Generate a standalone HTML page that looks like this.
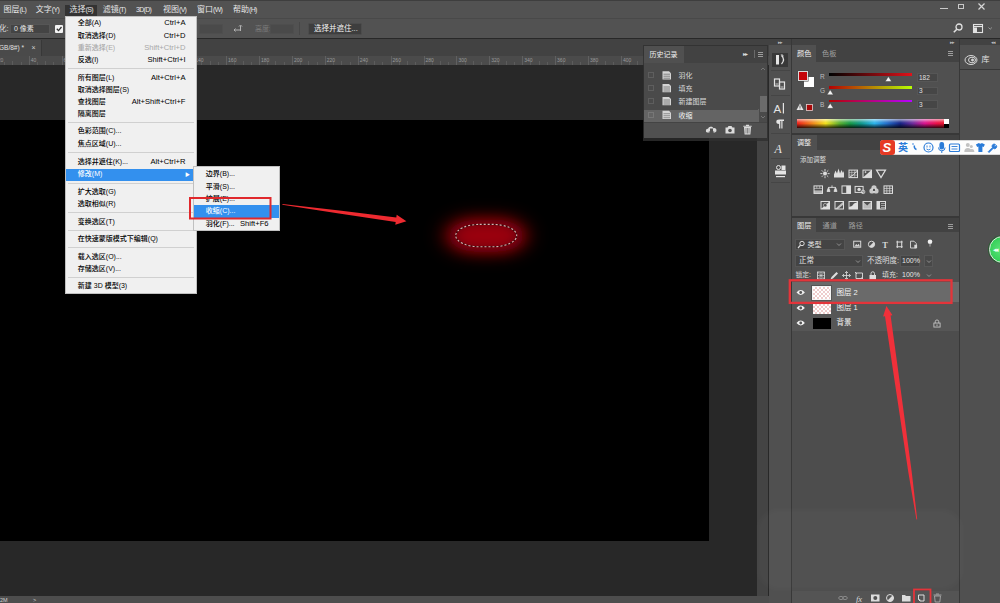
<!DOCTYPE html>
<html lang="zh-CN">
<head>
<meta charset="utf-8">
<title>Photoshop</title>
<style>
*{box-sizing:border-box;margin:0;padding:0}
html,body{width:1000px;height:603px;overflow:hidden;background:#282828}
body{position:relative;font-family:"Liberation Sans","Noto Sans CJK SC",sans-serif;font-size:8.5px;color:#e6e6e6;line-height:1}
.abs{position:absolute}
.t{position:absolute;white-space:nowrap;line-height:10px;height:10px}
#menubar{left:0;top:0;width:1000px;height:17.5px;background:#525252;border-top:1.2px solid #3e3e3e}
#optbar{left:0;top:17.5px;width:1000px;height:20.7px;background:#525252;border-top:1px solid #494949}
#tabbar{left:0;top:39px;width:770px;height:17px;background:#424242}
#ruler{left:0;top:56px;width:770px;height:9px;background:#4b4b4b}
#canvas{left:0;top:120.2px;width:709.2px;height:421px;background:#000}
#status{left:0;top:595.5px;width:769px;height:7.5px;background:#4d4d4d}
.menu{background:#f0f0f0;border:1px solid #c0c0c0;color:#000;font-weight:500}
.mi{position:absolute;left:0;right:0;height:12.4px;line-height:12.4px;font-size:7px;white-space:nowrap}
.mi .l{position:absolute;left:11.8px;top:-0.4px}
.mi .r{position:absolute;right:10px;top:-0.4px;font-size:7.6px}
.mi.dis{color:#a8a8a8}
.mi.hl{background:#3390ee;color:#fff}
.sep{position:absolute;left:2px;right:2px;height:1px;background:#d0d0d0}
.checker{background-color:#fff;background-image:linear-gradient(45deg,#ecc 25%,transparent 25%,transparent 75%,#ecc 75%),linear-gradient(45deg,#ecc 25%,transparent 25%,transparent 75%,#ecc 75%);background-size:4px 4px;background-position:0 0,2px 2px}
.s{font-size:7px;letter-spacing:-0.7px}
#mb .t{font-size:8px}
</style>
</head>
<body>
<!-- top bars -->
<div id="menubar" class="abs"></div>
<div id="optbar" class="abs"></div>
<div id="tabbar" class="abs"></div>
<div id="ruler" class="abs"></div>
<div id="canvas" class="abs"></div>
<div id="status" class="abs"></div>

<!-- menubar text -->
<div id="mb">
<div class="t" style="left:3.6px;top:5px">图层<span class="s">(L)</span></div>
<div class="t" style="left:35.8px;top:5px">文字<span class="s">(Y)</span></div>
<div class="abs" style="left:65px;top:5px;width:32px;height:11px;background:#333"></div>
<div class="t" style="left:69.6px;top:5px">选择<span class="s">(S)</span></div>
<div class="t" style="left:102.7px;top:5px">滤镜<span class="s">(T)</span></div>
<div class="t" style="left:136px;top:5px"><span class="s">3D(D)</span></div>
<div class="t" style="left:163px;top:5px">视图<span class="s">(V)</span></div>
<div class="t" style="left:197px;top:5px">窗口<span class="s">(W)</span></div>
<div class="t" style="left:233px;top:5px">帮助<span class="s">(H)</span></div>

</div>
<!-- RIGHT-PANELS -->
<!-- right dock background -->
<div class="abs" style="left:770px;top:39px;width:230px;height:564px;background:#383838"></div>
<!-- icon strip -->
<div class="abs" style="left:768.500px;top:39px;width:22.500px;height:6px;background:#424242"></div>
<div class="abs" style="left:768.500px;top:45px;width:22.500px;height:558px;background:#505050"></div>
<div class="abs" style="left:772px;top:53px;width:16px;height:14px;background:#383838"></div>
<div class="abs" style="left:771px;top:70px;width:19px;height:1px;background:#454545"></div>
<div class="abs" style="left:771px;top:95px;width:19px;height:1px;background:#454545"></div>
<div class="abs" style="left:771px;top:133px;width:19px;height:1px;background:#454545"></div>
<div class="abs" style="left:771px;top:158px;width:19px;height:1px;background:#454545"></div>
<div class="abs" style="left:771px;top:182px;width:19px;height:1px;background:#454545"></div>
<svg class="abs" style="left:770px;top:45px" width="21" height="145" viewBox="0 0 21 145">
 <g fill="none" stroke="#e4e4e4" stroke-width="1.200">
  <rect x="6" y="10" width="3" height="9.500" fill="#e4e4e4" stroke="none"/>
  <path d="M11.500 10.500q4 4 0 8.500"/><path d="M10.800 9.800l2.200 0.300l-0.300 2" stroke-width="0.800"/>
  <rect x="4.500" y="34" width="5" height="7"/><rect x="9.500" y="37" width="5" height="7"/>
  <path d="M5.500 39h3M10.500 42h3" stroke-width="0.800"/>
 </g>
 <text x="3.500" y="67.500" font-size="11.500" fill="#e4e4e4" font-family="Liberation Sans, sans-serif">A</text>
 <rect x="12.800" y="58" width="1.200" height="10.500" fill="#e4e4e4"/>
 <path d="M7 74.500h7v1.500h-1.500v7.500h-1.200v-7.500h-1v7.500h-1.200v-4.500q-2.800 0-2.800-2.200q0-2.300 2.800-2.300z" fill="#e4e4e4"/>
 <text x="4.500" y="107.500" font-size="12" font-style="italic" fill="#e4e4e4" font-family="Liberation Serif, serif">A</text>
 <rect x="5" y="125.500" width="11" height="4" fill="#e4e4e4"/><rect x="6" y="131" width="9" height="1.200" fill="#e4e4e4"/>
 <circle cx="8.500" cy="122.500" r="2" fill="none" stroke="#e4e4e4" stroke-width="1"/><rect x="11.500" y="120.500" width="4" height="4.500" fill="#e4e4e4"/>
</svg>
<div class="abs" style="left:778px;top:40.500px;width:7px;height:3px;font-size:5px;line-height:3px;color:#bbb;letter-spacing:-1px">▸▸</div>

<!-- color panel -->
<div class="abs" style="left:792px;top:39px;width:167px;height:6px;background:#424242"></div>
<div class="abs" style="left:792px;top:45px;width:167px;height:17px;background:#424242"></div>
<div class="abs" style="left:792px;top:45px;width:24px;height:18px;background:#505050"></div>
<div class="abs" style="left:792px;top:62px;width:167px;height:71px;background:#505050"></div>
<div class="t" style="left:797px;top:49px;font-size:7.200px;color:#f0f0f0">颜色</div>
<div class="t" style="left:822px;top:49px;font-size:7.200px;color:#a0a0a0">色板</div>
<div class="abs" style="left:948px;top:51px;width:5px;height:1px;background:#9c9c9c;box-shadow:0 2px 0 #9c9c9c,0 4px 0 #9c9c9c"></div>
<div class="abs" style="left:950px;top:40.500px;width:7px;height:3px;font-size:5px;line-height:3px;color:#bbb;letter-spacing:-1px">▸▸</div>
<!-- swatches -->
<div class="abs" style="left:803.500px;top:77px;width:10.500px;height:10px;background:#fff"></div>
<div class="abs" style="left:797.500px;top:70.500px;width:10.500px;height:10.500px;background:#c4040a;border:1px solid #d8d8d8;box-shadow:0 0 0 0.500px #444"></div>
<div class="t" style="left:820px;top:72px;font-size:6.500px;color:#bdbdbd">R</div>
<div class="t" style="left:820px;top:86px;font-size:6.500px;color:#bdbdbd">G</div>
<div class="t" style="left:820px;top:99.500px;font-size:6.500px;color:#bdbdbd">B</div>
<div class="abs" style="left:829px;top:72.500px;width:83px;height:3px;background:linear-gradient(90deg,#000303 0%,#1a0303 12%,#e0121a 100%)"></div>
<div class="abs" style="left:829px;top:86px;width:83px;height:2.500px;background:linear-gradient(90deg,#b60003,#b6ff03)"></div>
<div class="abs" style="left:829px;top:99.500px;width:83px;height:2.500px;background:linear-gradient(90deg,#b60300,#b603ff)"></div>
<svg class="abs" style="left:820px;top:70px" width="100" height="45" viewBox="0 0 100 45">
 <g fill="#f4f4f4" stroke="#333" stroke-width="0.400">
  <path d="M68.400 6.500l3.200 5h-6.400z"/><path d="M10.200 19.800l3.200 5h-6.400z"/><path d="M10.200 33.300l3.200 5h-6.400z"/>
 </g>
</svg>
<div class="abs" style="left:917px;top:73px;width:21px;height:8.500px;background:#464646;border:1px solid #565656"></div>
<div class="abs" style="left:917px;top:86.500px;width:21px;height:8.500px;background:#464646;border:1px solid #565656"></div>
<div class="abs" style="left:917px;top:100px;width:21px;height:8.500px;background:#464646;border:1px solid #565656"></div>
<div class="t" style="left:919px;top:72.500px;font-size:6.500px;color:#e0e0e0">182</div>
<div class="t" style="left:919px;top:86px;font-size:6.500px;color:#e0e0e0">3</div>
<div class="t" style="left:919px;top:99.500px;font-size:6.500px;color:#e0e0e0">3</div>
<svg class="abs" style="left:796px;top:102px" width="20" height="11" viewBox="0 0 20 11">
 <path d="M4 1.500l3.500 6.500h-7z" fill="#e8e8e8"/><rect x="3.600" y="3.500" width="0.800" height="2.500" fill="#444"/><rect x="3.600" y="6.500" width="0.800" height="0.800" fill="#444"/>
 <rect x="10.500" y="2.500" width="6" height="6" fill="#a80808" stroke="#e6d0d0" stroke-width="0.800"/>
</svg>
<div class="abs" style="left:796.500px;top:119px;width:152px;height:9px;background:linear-gradient(180deg,rgba(255,255,255,.62) 0%,rgba(255,255,255,.1) 35%,rgba(0,0,0,0) 50%,rgba(0,0,0,.8) 100%),linear-gradient(90deg,#ec201a 0%,#f27a1c 9%,#f2e21e 19%,#5cb030 28%,#189a48 35%,#10988a 42%,#2cb4ec 51%,#2470cc 59%,#162486 68%,#6c2c9c 76%,#d8148e 84%,#ec1048 92%,#e41a1a 100%)"></div>
<div class="abs" style="left:944px;top:119px;width:4.500px;height:4.500px;background:#fff"></div>
<div class="abs" style="left:944px;top:123.500px;width:4.500px;height:4.500px;background:#000"></div>

<!-- adjustments panel -->
<div class="abs" style="left:792px;top:135px;width:167px;height:15px;background:#424242"></div>
<div class="abs" style="left:792px;top:135px;width:25px;height:16px;background:#505050"></div>
<div class="abs" style="left:792px;top:150px;width:167px;height:66px;background:#505050"></div>
<div class="t" style="left:797px;top:138px;font-size:7px;color:#f0f0f0">调整</div>
<div class="t" style="left:800px;top:155px;font-size:6.500px;color:#dcdcdc">添加调整</div>
<svg class="abs" style="left:792px;top:165px" width="110" height="50" viewBox="0 0 110 50"><circle cx="33" cy="8.599999999999994" r="2" fill="#dedede"/><line x1="35.60" y1="8.60" x2="37.60" y2="8.60" stroke="#dedede" stroke-width="0.9"/><line x1="34.84" y1="10.44" x2="36.25" y2="11.85" stroke="#dedede" stroke-width="0.9"/><line x1="33.00" y1="11.20" x2="33.00" y2="13.20" stroke="#dedede" stroke-width="0.9"/><line x1="31.16" y1="10.44" x2="29.75" y2="11.85" stroke="#dedede" stroke-width="0.9"/><line x1="30.40" y1="8.60" x2="28.40" y2="8.60" stroke="#dedede" stroke-width="0.9"/><line x1="31.16" y1="6.76" x2="29.75" y2="5.35" stroke="#dedede" stroke-width="0.9"/><line x1="33.00" y1="6.00" x2="33.00" y2="4.00" stroke="#dedede" stroke-width="0.9"/><line x1="34.84" y1="6.76" x2="36.25" y2="5.35" stroke="#dedede" stroke-width="0.9"/><path d="M42 12.599999999999994v-3l1.5-4l1.5 3l1.5-5l1.500 5l1.500-3.500l1.500 3l1 -2v6.500z" fill="#dedede"/><g transform="translate(56.5,4.6)"><rect x="0.5" y="0.5" width="8.5" height="7.5" fill="none" stroke="#dedede" stroke-width="1"/><path d="M0.500 3h8.500M0.500 5.500h8.500M3.300 0.500v7.500M6.200 0.500v7.500" stroke="#dedede" stroke-width="0.500"/><path d="M1 7.500q4 -1 7.500 -6.500" stroke="#dedede" fill="none" stroke-width="0.900"/></g><g transform="translate(70.5,4.6)"><rect x="0.5" y="0.5" width="8.5" height="7.5" fill="none" stroke="#dedede" stroke-width="1"/><path d="M0.500 8l8.500-7.500v7.500z" fill="#dedede"/><path d="M2 2.500h2M3 1.500v2" stroke="#dedede" stroke-width="0.700"/></g><path d="M84.5 5.099999999999994h9l-4.500 7.500z" fill="none" stroke="#dedede" stroke-width="1.200"/><g transform="translate(21.5,20.4)"><rect x="0.5" y="0.5" width="8.5" height="7.5" fill="none" stroke="#dedede" stroke-width="1"/><path d="M0.500 3h8.500M3.300 0.500v2.500M6.200 0.500v2.500" stroke="#dedede" stroke-width="0.600"/><rect x="0.500" y="5" width="8.500" height="3" fill="#dedede" opacity="0.700"/></g><path d="M40 20.400000000000006v2M36.5 22.400000000000006h7M36.5 22.400000000000006l-1.500 4h3zM43.5 22.400000000000006l-1.500 4h3z" stroke="#dedede" stroke-width="0.900" fill="#dedede"/><g transform="translate(49.5,20.4)"><rect x="0.5" y="0.5" width="8.5" height="7.5" fill="none" stroke="#dedede" stroke-width="1"/><rect x="4.700" y="0.500" width="4.300" height="7.500" fill="#dedede"/></g><rect x="63.10000000000002" y="21.400000000000006" width="8" height="6" fill="none" stroke="#dedede" stroke-width="1"/><circle cx="67.10000000000002" cy="24.400000000000006" r="1.700" fill="#dedede"/><circle cx="71.10000000000002" cy="26.900000000000006" r="1.800" fill="none" stroke="#dedede" stroke-width="0.800"/><circle cx="82" cy="22.900000000000006" r="2.600" fill="#dedede" opacity="0.850"/><circle cx="80" cy="25.900000000000006" r="2.600" fill="#dedede" opacity="0.850"/><circle cx="84" cy="25.900000000000006" r="2.600" fill="#dedede" opacity="0.850"/><circle cx="82" cy="24.900000000000006" r="1.200" fill="#505050"/><g transform="translate(91.5,20.4)"><rect x="0.5" y="0.5" width="8.5" height="7.5" fill="none" stroke="#dedede" stroke-width="1"/><path d="M0.500 3h8.500M0.500 5.500h8.500M3.300 0.500v7.500M6.200 0.500v7.500" stroke="#dedede" stroke-width="0.700"/></g><g transform="translate(28.5,36.0)"><rect x="0.5" y="0.5" width="8.5" height="7.5" fill="none" stroke="#dedede" stroke-width="1"/><path d="M0.500 8l8.500-7.500v7.500z" fill="#dedede"/><circle cx="4.700" cy="4.200" r="1.800" fill="#505050" stroke="#dedede" stroke-width="0.600"/></g><g transform="translate(42.5,36.0)"><rect x="0.5" y="0.5" width="8.5" height="7.5" fill="none" stroke="#dedede" stroke-width="1"/><path d="M0.500 8l8.500-7.500v3l-5.500 4.500z" fill="#dedede" opacity="0.800"/></g><g transform="translate(56.5,36.0)"><rect x="0.5" y="0.5" width="8.5" height="7.5" fill="none" stroke="#dedede" stroke-width="1"/><path d="M0.500 8v-2l3-1l2-2.500l3.500-1.500v7z" fill="#dedede"/></g><g transform="translate(70.5,36.0)"><rect x="0.5" y="0.5" width="8.5" height="7.5" fill="none" stroke="#dedede" stroke-width="1"/><path d="M0.500 0.500l4.200 4l4.300-4v7.500h-8.500z" fill="#dedede" opacity="0.750"/></g><g transform="translate(84.5,36.0)"><rect x="0.5" y="0.5" width="8.5" height="7.5" fill="none" stroke="#dedede" stroke-width="1"/><rect x="0.500" y="0.500" width="3" height="7.500" fill="#dedede"/><path d="M4.500 2.500h4M4.500 4.500h4M4.500 6.500h4" stroke="#dedede" stroke-width="0.600"/></g></svg>

<!-- layers panel -->
<div class="abs" style="left:792px;top:218px;width:167px;height:14px;background:#424242"></div>
<div class="abs" style="left:792px;top:218px;width:24px;height:15px;background:#505050"></div>
<div class="abs" style="left:792px;top:232px;width:167px;height:371px;background:#505050"></div>
<div class="t" style="left:797px;top:220.500px;font-size:7.200px;color:#f0f0f0">图层</div>
<div class="t" style="left:822.500px;top:220.500px;font-size:7.200px;color:#a0a0a0">通道</div>
<div class="t" style="left:848.500px;top:220.500px;font-size:7.200px;color:#a0a0a0">路径</div>
<div class="abs" style="left:948px;top:224px;width:5px;height:1px;background:#9c9c9c;box-shadow:0 2px 0 #9c9c9c,0 4px 0 #9c9c9c"></div>
<!-- filter row -->
<div class="abs" style="left:795px;top:239px;width:50px;height:11px;background:#444;border:1px solid #565656"></div>
<svg class="abs" style="left:797px;top:240px" width="9" height="9" viewBox="0 0 9 9"><circle cx="5" cy="3.500" r="2.200" fill="none" stroke="#dcdcdc" stroke-width="1"/><path d="M3.500 5.200l-2.500 2.800" stroke="#dcdcdc" stroke-width="1.200"/></svg>
<div class="t" style="left:807.500px;top:239.500px;font-size:7px;color:#e4e4e4">类型</div>
<svg class="abs" style="left:836px;top:242px" width="6" height="5" viewBox="0 0 6 5"><path d="M1 1.500l2 2l2-2" fill="none" stroke="#999" stroke-width="0.900"/></svg>
<svg class="abs" style="left:850px;top:237px" width="90" height="15" viewBox="0 0 90 15">
 <g fill="none" stroke="#d8d8d8" stroke-width="1">
  <rect x="3.700" y="4.200" width="7" height="6"/><path d="M4.500 9.500l1.700-2.500l1.300 1.300l1.200-1.600l1.300 2.800z" fill="#d8d8d8" stroke="none"/>
  <circle cx="21.500" cy="7.300" r="3.100"/><path d="M19.300 9.500a3.100 3.100 0 0 0 4.400-4.400z" fill="#d8d8d8" stroke="none"/>
  <path d="M46.300 5h6.400M46.300 9.800h6.400M47.300 3.800v7.200M51.700 3.800v7.200" stroke-width="1.100"/>
  <path d="M60.500 4.200h3.500l2.300 2.300v4.500h-5.800z" stroke-width="0.900"/><path d="M64.300 7.800h2.800v3.400h-2.800z" fill="#d8d8d8" stroke="none"/>
 </g>
 <text x="32.200" y="10.600" font-size="8.500" font-weight="bold" font-family="Liberation Serif, serif" fill="#d8d8d8">T</text>
 <circle cx="80" cy="4.700" r="2.300" fill="#f0f0f0"/><rect x="79.400" y="6.800" width="1.200" height="2.800" fill="#9a9a9a"/>
</svg>
<!-- blend row -->
<div class="abs" style="left:795px;top:255px;width:68px;height:11.500px;background:#444;border:1px solid #565656"></div>
<div class="t" style="left:799px;top:256px;font-size:7.500px;color:#e4e4e4">正常</div>
<svg class="abs" style="left:855px;top:258.500px" width="6" height="5" viewBox="0 0 6 5"><path d="M1 1.500l2 2l2-2" fill="none" stroke="#999" stroke-width="0.900"/></svg>
<div class="t" style="left:867px;top:256px;font-size:7.500px;color:#dcdcdc">不透明度:</div>
<div class="abs" style="left:900px;top:255px;width:20px;height:11.500px;background:#444;border:1px solid #565656"></div>
<div class="t" style="left:902px;top:256px;font-size:7px;color:#e4e4e4">100%</div>
<div class="abs" style="left:924px;top:255px;width:8.500px;height:11.500px;background:#484848;border:1px solid #585858"></div>
<svg class="abs" style="left:925.500px;top:258.500px" width="6" height="5" viewBox="0 0 6 5"><path d="M1 1.500l2 2l2-2" fill="none" stroke="#999" stroke-width="0.900"/></svg>
<!-- lock row -->
<div class="t" style="left:795.500px;top:270.200px;font-size:6.800px;color:#dcdcdc">锁定:</div>
<svg class="abs" style="left:815px;top:269px" width="65" height="13" viewBox="0 0 65 13">
 <g fill="none" stroke="#dedede" stroke-width="1">
  <rect x="2.500" y="3" width="7" height="7" stroke-width="0.800"/><path d="M2.500 3l7 7M9.500 3l-7 7M6 3v7M2.500 6.500h7" stroke-width="0.600"/>
  <path d="M15.500 10.500l1-2.500l5-5l1.500 1.500l-5 5z" fill="#dedede" stroke="none"/>
  <path d="M31.500 2.500v8M27.500 6.500h8M30 4l1.500-1.500l1.500 1.500M30 9l1.500 1.500l1.500-1.500M29 5l-1.500 1.500l1.500 1.500M34 5l1.500 1.500l-1.500 1.500" stroke-width="0.800"/>
  <path d="M41 4h6.500v5.500h-6.500zM40 3l2 2M48.500 10.500l-2-2" stroke-width="0.900"/>
  <rect x="54.500" y="6" width="6.500" height="4.500" fill="#dedede" stroke="none"/><path d="M56 6v-1.500a1.700 1.700 0 0 1 3.500 0v1.500" stroke-width="0.900"/>
 </g>
</svg>
<div class="t" style="left:882px;top:270.200px;font-size:7px;color:#dcdcdc">填充:</div>
<div class="t" style="left:902px;top:270.200px;font-size:7px;color:#e4e4e4">100%</div>
<svg class="abs" style="left:925.500px;top:273px" width="6" height="5" viewBox="0 0 6 5"><path d="M1 1.500l2 2l2-2" fill="none" stroke="#999" stroke-width="0.900"/></svg>
<!-- layer rows -->
<div class="abs" style="left:792px;top:282px;width:167px;height:49px;background:#565656"></div>
<div class="abs" style="left:792px;top:331px;width:167px;height:260px;background:#4d4d4d"></div>
<div class="abs" style="left:792px;top:282px;width:167px;height:20px;background:#6a6a6a"></div>
<svg class="abs" style="left:795px;top:286px" width="12" height="42" viewBox="0 0 12 42">
 <g fill="#f2f2f2">
  <path d="M1.500 6.500q4.200-4.800 8.400 0q-4.200 4.800-8.400 0z"/><circle cx="5.700" cy="6.500" r="1.400" fill="#555"/>
  <path d="M1.500 22q4.200-4.800 8.400 0q-4.200 4.800-8.400 0z"/><circle cx="5.700" cy="22" r="1.400" fill="#555"/>
  <path d="M1.500 37q4.200-4.800 8.400 0q-4.200 4.800-8.400 0z"/><circle cx="5.700" cy="37" r="1.400" fill="#555"/>
 </g>
</svg>
<div class="abs checker" style="left:812px;top:286px;width:19px;height:13.500px;border:1px solid #f4f4f4;outline:1px solid #555"></div>
<div class="abs checker" style="left:812.500px;top:303.500px;width:18px;height:10px"></div>
<div class="abs" style="left:812.500px;top:318px;width:18px;height:10.500px;background:#000"></div>
<div class="t" style="left:836.500px;top:287.500px;font-size:7.500px;color:#f4f4f4">图层 2</div>
<div class="t" style="left:836.500px;top:303px;font-size:7.500px;color:#f0f0f0">图层 1</div>
<div class="t" style="left:836.500px;top:318px;font-size:7.500px;color:#f0f0f0">背景</div>
<svg class="abs" style="left:932.500px;top:319px" width="8" height="9" viewBox="0 0 9 10"><rect x="1" y="4.500" width="7" height="4.500" fill="none" stroke="#c4c4c4" stroke-width="1"/><path d="M2.500 4.500v-1.500a2 2 0 0 1 4 0v1.500" fill="none" stroke="#c4c4c4" stroke-width="1"/><rect x="4" y="6" width="1" height="2" fill="#c4c4c4"/></svg>
<!-- bottom toolbar -->
<div class="abs" style="left:792px;top:591px;width:167px;height:12px;background:#545454"></div>
<svg class="abs" style="left:835px;top:590px" width="112" height="13" viewBox="0 0 112 13">
 <g fill="none" stroke="#dcdcdc" stroke-width="1">
  <g stroke="#8a8a8a"><ellipse cx="6" cy="8" rx="2.300" ry="1.600"/><ellipse cx="10" cy="8" rx="2.300" ry="1.600"/></g>
  <rect x="36" y="4.500" width="8.500" height="7" fill="#dcdcdc" stroke="none"/><circle cx="40.300" cy="8" r="2" fill="#505050" stroke="none"/>
  <circle cx="55" cy="8" r="3.500"/><path d="M52.500 10.500l5-5a3.500 3.500 0 0 1 -5 5z" fill="#dcdcdc" stroke="none"/>
  <path d="M67 5h3l1 1h4.500v5.500h-8.500z" fill="#dcdcdc" stroke="none"/>
  <path d="M83.500 5h5.500v6h-4l-1.500-1.500z" /><path d="M83.500 9.500h1.500v1.500" stroke-width="0.700"/>
  <path d="M99.500 6h6l-0.700 6h-4.600zM98.500 5h8M101 4h3" stroke-width="0.900" stroke="#a8a8a8"/>
 </g>
 <text x="21" y="11.500" font-size="8.500" font-style="italic" font-family="Liberation Serif, serif" fill="#dcdcdc">fx</text>
</svg>


<!-- far-right column -->
<div class="abs" style="left:960px;top:39px;width:40px;height:6px;background:#424242"></div>
<div class="abs" style="left:960px;top:45px;width:40px;height:24px;background:#505050"></div>
<div class="abs" style="left:960px;top:70px;width:40px;height:533px;background:#505050"></div>
<div class="abs" style="left:991px;top:40.500px;width:7px;height:3px;font-size:5px;line-height:3px;color:#bbb;letter-spacing:-1px">◂◂</div>
<svg class="abs" style="left:964px;top:53px" width="14" height="14" viewBox="0 0 14 14"><g fill="none" stroke="#d8d8d8" stroke-width="1"><ellipse cx="7" cy="7" rx="6" ry="4.500"/><ellipse cx="8" cy="7" rx="3.500" ry="2.800"/><circle cx="8.500" cy="7" r="1" fill="#d8d8d8"/></g></svg>
<div class="t" style="left:981.500px;top:55px;font-size:8px;color:#e0e0e0">库</div>

<!-- /RIGHT-PANELS -->

<!-- CANVAS-ART -->
<div class="abs" style="left:757px;top:56px;width:11px;height:540px;background:#444"></div>
<div class="abs" style="left:-4.2px;top:56px;width:1px;height:9px;background:#606060"></div>
<div class="t" style="left:-2.2px;top:57px;font-size:5px;line-height:7px;height:7px;color:#9a9a9a">20</div>
<div class="abs" style="left:4.0px;top:62px;width:1px;height:3px;background:#5c5c5c"></div>
<div class="abs" style="left:12.2px;top:61px;width:1px;height:4px;background:#5c5c5c"></div>
<div class="abs" style="left:20.5px;top:62px;width:1px;height:3px;background:#5c5c5c"></div>
<div class="abs" style="left:28.7px;top:56px;width:1px;height:9px;background:#606060"></div>
<div class="t" style="left:30.7px;top:57px;font-size:5px;line-height:7px;height:7px;color:#9a9a9a">40</div>
<div class="abs" style="left:36.9px;top:62px;width:1px;height:3px;background:#5c5c5c"></div>
<div class="abs" style="left:45.1px;top:61px;width:1px;height:4px;background:#5c5c5c"></div>
<div class="abs" style="left:53.4px;top:62px;width:1px;height:3px;background:#5c5c5c"></div>
<div class="abs" style="left:61.6px;top:56px;width:1px;height:9px;background:#606060"></div>
<div class="t" style="left:63.6px;top:57px;font-size:5px;line-height:7px;height:7px;color:#9a9a9a">60</div>
<div class="abs" style="left:69.8px;top:62px;width:1px;height:3px;background:#5c5c5c"></div>
<div class="abs" style="left:78.0px;top:61px;width:1px;height:4px;background:#5c5c5c"></div>
<div class="abs" style="left:86.3px;top:62px;width:1px;height:3px;background:#5c5c5c"></div>
<div class="abs" style="left:94.5px;top:56px;width:1px;height:9px;background:#606060"></div>
<div class="t" style="left:96.5px;top:57px;font-size:5px;line-height:7px;height:7px;color:#9a9a9a">80</div>
<div class="abs" style="left:102.7px;top:62px;width:1px;height:3px;background:#5c5c5c"></div>
<div class="abs" style="left:110.9px;top:61px;width:1px;height:4px;background:#5c5c5c"></div>
<div class="abs" style="left:119.2px;top:62px;width:1px;height:3px;background:#5c5c5c"></div>
<div class="abs" style="left:127.4px;top:56px;width:1px;height:9px;background:#606060"></div>
<div class="t" style="left:129.4px;top:57px;font-size:5px;line-height:7px;height:7px;color:#9a9a9a">100</div>
<div class="abs" style="left:135.6px;top:62px;width:1px;height:3px;background:#5c5c5c"></div>
<div class="abs" style="left:143.8px;top:61px;width:1px;height:4px;background:#5c5c5c"></div>
<div class="abs" style="left:152.1px;top:62px;width:1px;height:3px;background:#5c5c5c"></div>
<div class="abs" style="left:160.3px;top:56px;width:1px;height:9px;background:#606060"></div>
<div class="t" style="left:162.3px;top:57px;font-size:5px;line-height:7px;height:7px;color:#9a9a9a">120</div>
<div class="abs" style="left:168.5px;top:62px;width:1px;height:3px;background:#5c5c5c"></div>
<div class="abs" style="left:176.7px;top:61px;width:1px;height:4px;background:#5c5c5c"></div>
<div class="abs" style="left:185.0px;top:62px;width:1px;height:3px;background:#5c5c5c"></div>
<div class="abs" style="left:193.2px;top:56px;width:1px;height:9px;background:#606060"></div>
<div class="t" style="left:195.2px;top:57px;font-size:5px;line-height:7px;height:7px;color:#9a9a9a">140</div>
<div class="abs" style="left:201.4px;top:62px;width:1px;height:3px;background:#5c5c5c"></div>
<div class="abs" style="left:209.6px;top:61px;width:1px;height:4px;background:#5c5c5c"></div>
<div class="abs" style="left:217.9px;top:62px;width:1px;height:3px;background:#5c5c5c"></div>
<div class="abs" style="left:226.1px;top:56px;width:1px;height:9px;background:#606060"></div>
<div class="t" style="left:228.1px;top:57px;font-size:5px;line-height:7px;height:7px;color:#9a9a9a">160</div>
<div class="abs" style="left:234.3px;top:62px;width:1px;height:3px;background:#5c5c5c"></div>
<div class="abs" style="left:242.5px;top:61px;width:1px;height:4px;background:#5c5c5c"></div>
<div class="abs" style="left:250.8px;top:62px;width:1px;height:3px;background:#5c5c5c"></div>
<div class="abs" style="left:259.0px;top:56px;width:1px;height:9px;background:#606060"></div>
<div class="t" style="left:261.0px;top:57px;font-size:5px;line-height:7px;height:7px;color:#9a9a9a">180</div>
<div class="abs" style="left:267.2px;top:62px;width:1px;height:3px;background:#5c5c5c"></div>
<div class="abs" style="left:275.4px;top:61px;width:1px;height:4px;background:#5c5c5c"></div>
<div class="abs" style="left:283.7px;top:62px;width:1px;height:3px;background:#5c5c5c"></div>
<div class="abs" style="left:291.9px;top:56px;width:1px;height:9px;background:#606060"></div>
<div class="t" style="left:293.9px;top:57px;font-size:5px;line-height:7px;height:7px;color:#9a9a9a">200</div>
<div class="abs" style="left:300.1px;top:62px;width:1px;height:3px;background:#5c5c5c"></div>
<div class="abs" style="left:308.3px;top:61px;width:1px;height:4px;background:#5c5c5c"></div>
<div class="abs" style="left:316.6px;top:62px;width:1px;height:3px;background:#5c5c5c"></div>
<div class="abs" style="left:324.8px;top:56px;width:1px;height:9px;background:#606060"></div>
<div class="t" style="left:326.8px;top:57px;font-size:5px;line-height:7px;height:7px;color:#9a9a9a">220</div>
<div class="abs" style="left:333.0px;top:62px;width:1px;height:3px;background:#5c5c5c"></div>
<div class="abs" style="left:341.2px;top:61px;width:1px;height:4px;background:#5c5c5c"></div>
<div class="abs" style="left:349.5px;top:62px;width:1px;height:3px;background:#5c5c5c"></div>
<div class="abs" style="left:357.7px;top:56px;width:1px;height:9px;background:#606060"></div>
<div class="t" style="left:359.7px;top:57px;font-size:5px;line-height:7px;height:7px;color:#9a9a9a">240</div>
<div class="abs" style="left:365.9px;top:62px;width:1px;height:3px;background:#5c5c5c"></div>
<div class="abs" style="left:374.1px;top:61px;width:1px;height:4px;background:#5c5c5c"></div>
<div class="abs" style="left:382.4px;top:62px;width:1px;height:3px;background:#5c5c5c"></div>
<div class="abs" style="left:390.6px;top:56px;width:1px;height:9px;background:#606060"></div>
<div class="t" style="left:392.6px;top:57px;font-size:5px;line-height:7px;height:7px;color:#9a9a9a">260</div>
<div class="abs" style="left:398.8px;top:62px;width:1px;height:3px;background:#5c5c5c"></div>
<div class="abs" style="left:407.0px;top:61px;width:1px;height:4px;background:#5c5c5c"></div>
<div class="abs" style="left:415.3px;top:62px;width:1px;height:3px;background:#5c5c5c"></div>
<div class="abs" style="left:423.5px;top:56px;width:1px;height:9px;background:#606060"></div>
<div class="t" style="left:425.5px;top:57px;font-size:5px;line-height:7px;height:7px;color:#9a9a9a">280</div>
<div class="abs" style="left:431.7px;top:62px;width:1px;height:3px;background:#5c5c5c"></div>
<div class="abs" style="left:439.9px;top:61px;width:1px;height:4px;background:#5c5c5c"></div>
<div class="abs" style="left:448.2px;top:62px;width:1px;height:3px;background:#5c5c5c"></div>
<div class="abs" style="left:456.4px;top:56px;width:1px;height:9px;background:#606060"></div>
<div class="t" style="left:458.4px;top:57px;font-size:5px;line-height:7px;height:7px;color:#9a9a9a">300</div>
<div class="abs" style="left:464.6px;top:62px;width:1px;height:3px;background:#5c5c5c"></div>
<div class="abs" style="left:472.8px;top:61px;width:1px;height:4px;background:#5c5c5c"></div>
<div class="abs" style="left:481.1px;top:62px;width:1px;height:3px;background:#5c5c5c"></div>
<div class="abs" style="left:489.3px;top:56px;width:1px;height:9px;background:#606060"></div>
<div class="t" style="left:491.3px;top:57px;font-size:5px;line-height:7px;height:7px;color:#9a9a9a">320</div>
<div class="abs" style="left:497.5px;top:62px;width:1px;height:3px;background:#5c5c5c"></div>
<div class="abs" style="left:505.7px;top:61px;width:1px;height:4px;background:#5c5c5c"></div>
<div class="abs" style="left:514.0px;top:62px;width:1px;height:3px;background:#5c5c5c"></div>
<div class="abs" style="left:522.2px;top:56px;width:1px;height:9px;background:#606060"></div>
<div class="t" style="left:524.2px;top:57px;font-size:5px;line-height:7px;height:7px;color:#9a9a9a">340</div>
<div class="abs" style="left:530.4px;top:62px;width:1px;height:3px;background:#5c5c5c"></div>
<div class="abs" style="left:538.7px;top:61px;width:1px;height:4px;background:#5c5c5c"></div>
<div class="abs" style="left:546.9px;top:62px;width:1px;height:3px;background:#5c5c5c"></div>
<div class="abs" style="left:555.1px;top:56px;width:1px;height:9px;background:#606060"></div>
<div class="t" style="left:557.1px;top:57px;font-size:5px;line-height:7px;height:7px;color:#9a9a9a">360</div>
<div class="abs" style="left:563.3px;top:62px;width:1px;height:3px;background:#5c5c5c"></div>
<div class="abs" style="left:571.5px;top:61px;width:1px;height:4px;background:#5c5c5c"></div>
<div class="abs" style="left:579.8px;top:62px;width:1px;height:3px;background:#5c5c5c"></div>
<div class="abs" style="left:588.0px;top:56px;width:1px;height:9px;background:#606060"></div>
<div class="t" style="left:590.0px;top:57px;font-size:5px;line-height:7px;height:7px;color:#9a9a9a">380</div>
<div class="abs" style="left:596.2px;top:62px;width:1px;height:3px;background:#5c5c5c"></div>
<div class="abs" style="left:604.5px;top:61px;width:1px;height:4px;background:#5c5c5c"></div>
<div class="abs" style="left:612.7px;top:62px;width:1px;height:3px;background:#5c5c5c"></div>
<div class="abs" style="left:620.9px;top:56px;width:1px;height:9px;background:#606060"></div>
<div class="t" style="left:622.9px;top:57px;font-size:5px;line-height:7px;height:7px;color:#9a9a9a">400</div>
<div class="abs" style="left:629.1px;top:62px;width:1px;height:3px;background:#5c5c5c"></div>
<div class="abs" style="left:637.4px;top:61px;width:1px;height:4px;background:#5c5c5c"></div>
<div class="abs" style="left:645.6px;top:62px;width:1px;height:3px;background:#5c5c5c"></div>
<div class="abs" style="left:653.8px;top:56px;width:1px;height:9px;background:#606060"></div>
<div class="t" style="left:655.8px;top:57px;font-size:5px;line-height:7px;height:7px;color:#9a9a9a">420</div>
<div class="abs" style="left:662.0px;top:62px;width:1px;height:3px;background:#5c5c5c"></div>
<div class="abs" style="left:670.2px;top:61px;width:1px;height:4px;background:#5c5c5c"></div>
<div class="abs" style="left:678.5px;top:62px;width:1px;height:3px;background:#5c5c5c"></div>
<div class="abs" style="left:686.7px;top:56px;width:1px;height:9px;background:#606060"></div>
<div class="t" style="left:688.7px;top:57px;font-size:5px;line-height:7px;height:7px;color:#9a9a9a">440</div>
<div class="abs" style="left:694.9px;top:62px;width:1px;height:3px;background:#5c5c5c"></div>
<div class="abs" style="left:703.2px;top:61px;width:1px;height:4px;background:#5c5c5c"></div>
<div class="abs" style="left:711.4px;top:62px;width:1px;height:3px;background:#5c5c5c"></div>
<div class="abs" style="left:719.6px;top:56px;width:1px;height:9px;background:#606060"></div>
<div class="t" style="left:721.6px;top:57px;font-size:5px;line-height:7px;height:7px;color:#9a9a9a">460</div>
<div class="abs" style="left:727.8px;top:62px;width:1px;height:3px;background:#5c5c5c"></div>
<div class="abs" style="left:736.0px;top:61px;width:1px;height:4px;background:#5c5c5c"></div>
<div class="abs" style="left:744.3px;top:62px;width:1px;height:3px;background:#5c5c5c"></div>
<div class="abs" style="left:752.5px;top:56px;width:1px;height:9px;background:#606060"></div>
<div class="t" style="left:754.5px;top:57px;font-size:5px;line-height:7px;height:7px;color:#9a9a9a">480</div>
<!-- history panel -->
<div class="abs" style="left:643px;top:45px;width:125px;height:95.500px;background:#303030;opacity:.8"></div>
<div class="abs" style="left:644px;top:46px;width:123px;height:17px;background:#424242"></div>
<div class="abs" style="left:644px;top:46px;width:40px;height:18px;background:#505050"></div>
<div class="abs" style="left:644px;top:63px;width:123px;height:75px;background:#505050"></div>
<div class="abs" style="left:644px;top:63px;width:115px;height:59px;background:#4a4a4a"></div>
<div class="t" style="left:649.500px;top:49.500px;font-size:7px;color:#f0f0f0">历史记录</div>
<div class="abs" style="left:743px;top:52.500px;width:8px;height:3px;font-size:6px;line-height:3px;color:#ddd;letter-spacing:-1.200px">▸▸</div>
<div class="abs" style="left:753.500px;top:50px;width:1px;height:8px;background:#6a6a6a"></div>
<div class="abs" style="left:758px;top:51.500px;width:5px;height:1px;background:#9c9c9c;box-shadow:0 2px 0 #9c9c9c,0 4px 0 #9c9c9c"></div>
<div class="abs" style="left:644px;top:109px;width:115px;height:12.500px;background:#646464"></div>
<div class="abs" style="left:644px;top:82px;width:114px;height:1px;background:#4a4a4a"></div>
<div class="abs" style="left:644px;top:95px;width:114px;height:1px;background:#4a4a4a"></div>
<div class="abs" style="left:644px;top:108.500px;width:114px;height:1px;background:#4a4a4a"></div>
<div class="abs" style="left:644px;top:121.500px;width:123px;height:1px;background:#444"></div>
<div class="abs" style="left:648px;top:72px;width:6px;height:6px;border:1px solid #5e5e5e"></div>
<div class="abs" style="left:648px;top:85px;width:6px;height:6px;border:1px solid #5e5e5e"></div>
<div class="abs" style="left:648px;top:98px;width:6px;height:6px;border:1px solid #5e5e5e"></div>
<div class="abs" style="left:648px;top:112px;width:6px;height:6px;border:1px solid #777"></div>
<svg class="abs" style="left:660px;top:68px" width="14" height="56" viewBox="0 0 14 56"><path d="M2.500 3.2h6.500l2 2v6.300h-8.500z" fill="#d4d4d4"/><path d="M3.500 6.2h6.500M3.500 8.2h6.500M3.500 10.2h6.500" stroke="#4a4a4a" stroke-width="0.600"/><path d="M2.500 16h6.500l2 2v6.300h-8.500z" fill="#d4d4d4"/><path d="M3.500 19h6.500M3.500 21h6.500M3.500 23h6.500" stroke="#4a4a4a" stroke-width="0.600"/><path d="M2.500 29h6.500l2 2v6.300h-8.500z" fill="#d4d4d4"/><path d="M3.500 32h6.500M3.500 34h6.500M3.500 36h6.500" stroke="#4a4a4a" stroke-width="0.600"/><path d="M2.500 42.7h6.500l2 2v6.300h-8.500z" fill="#d4d4d4"/><path d="M3.500 45.7h6.500M3.500 47.7h6.500M3.500 49.7h6.500" stroke="#646464" stroke-width="0.600"/></svg>
<div class="t" style="left:678.500px;top:70.500px;font-size:7px;color:#dadada">羽化</div>
<div class="t" style="left:678.500px;top:83.500px;font-size:7px;color:#dadada">填充</div>
<div class="t" style="left:678.500px;top:96.500px;font-size:7px;color:#dadada">新建图层</div>
<div class="t" style="left:678.500px;top:110.500px;font-size:7px;color:#f2f2f2">收缩</div>
<div class="abs" style="left:759px;top:63px;width:8px;height:59px;background:#4a4a4a"></div>
<div class="abs" style="left:759.500px;top:96px;width:7px;height:16px;background:#6b6b6b"></div>
<svg class="abs" style="left:759px;top:64px" width="8" height="58" viewBox="0 0 8 58"><path d="M2 6l2-2l2 2M2 52l2 2l2-2" fill="none" stroke="#7a7a7a" stroke-width="0.900"/></svg>
<svg class="abs" style="left:704px;top:123px" width="52" height="14" viewBox="0 0 52 14">
 <g fill="#dcdcdc"><path d="M3 9.500a2 2 0 0 1 1-3.800a3 3 0 0 1 5.500-0.500a2.200 2.200 0 0 1 1.500 4.300z"/><path d="M6 5.500h3v3h1.500l-3 3l-3-3h1.500z" fill="#505050"/>
 <path d="M21.500 4.500h2l1-1.500h3l1 1.500h2v6h-9z"/><circle cx="26" cy="7.500" r="1.800" fill="#505050"/>
 <path d="M40 4h7l-0.600 7.500h-5.800z M39.300 2.800h8.400v0.900h-8.400z M42 1.800h3v1h-3z"/></g>
 <path d="M42 5v5.500M43.500 5v5.500M45 5v5.500" stroke="#505050" stroke-width="0.600"/>
</svg>

<!-- options bar content -->
<div class="t" style="left:-1px;top:24px;font-size:7.500px;color:#dcdcdc">化:</div>
<div class="abs" style="left:10px;top:23.500px;width:40px;height:10.500px;background:#444;border:1px solid #565656"></div>
<div class="t" style="left:14px;top:24px;font-size:7px;color:#e6e6e6">0 像素</div>
<div class="abs" style="left:55px;top:25px;width:8px;height:7.500px;background:#f4f4f4;border-radius:1px"></div>
<svg class="abs" style="left:55px;top:25px" width="8" height="8" viewBox="0 0 8 8"><path d="M1.800 3.800l1.700 1.800l3-3.600" fill="none" stroke="#333" stroke-width="1.300"/></svg>
<div class="abs" style="left:199px;top:23.500px;width:24px;height:10.500px;background:#4a4a4a;border:1px solid #4e4e4e"></div>
<svg class="abs" style="left:233px;top:23px" width="11" height="11" viewBox="0 0 11 11"><g fill="none" stroke="#bdbdbd" stroke-width="0.900"><path d="M2 7h5M7.500 3v5"/><path d="M1 7l1.500-1.500M1 7l1.500 1.500M7.500 2l-1.500 1.500M7.500 2l1.500 1.500" /></g></svg>
<div class="t" style="left:255px;top:24px;font-size:7px;color:#7a7a7a">高度:</div>
<div class="abs" style="left:270px;top:23.500px;width:24px;height:10.500px;background:#4a4a4a;border:1px solid #4e4e4e"></div>
<div class="abs" style="left:299px;top:22px;width:1px;height:13px;background:#474747"></div>
<div class="abs" style="left:308px;top:23px;width:54px;height:11.500px;background:#3e3e3e;border:1px solid #4c4c4c;border-radius:1.5px"></div>
<div class="t" style="left:314px;top:24px;font-size:7.500px;color:#f2f2f2">选择并遮住...</div>
<!-- tab -->
<div class="abs" style="left:0;top:39.500px;width:42px;height:16.500px;background:#4a4a4a;border-right:1px solid #383838"></div>
<div class="t" style="left:-1px;top:42.500px;font-size:6.500px;color:#e0e0e0">GB/8#) *</div>
<div class="t" style="left:31.500px;top:42.500px;font-size:7px;color:#d0d0d0">×</div>
<!-- window controls -->
<div class="abs" style="left:940px;top:7.500px;width:8px;height:1.500px;background:#c8c8c8"></div>
<div class="abs" style="left:957.500px;top:3.500px;width:6.500px;height:5.500px;border:1.200px solid #c8c8c8"></div>
<svg class="abs" style="left:977px;top:1.500px" width="9" height="9" viewBox="0 0 9 9"><path d="M1.500 1.500l6 6M7.500 1.500l-6 6" stroke="#d6d6d6" stroke-width="1.200"/></svg>
<svg class="abs" style="left:952px;top:22px" width="12" height="12" viewBox="0 0 12 12"><circle cx="7" cy="5" r="3" fill="none" stroke="#e2e2e2" stroke-width="1.300"/><path d="M4.800 7.200l-3 3" stroke="#e2e2e2" stroke-width="1.600"/></svg>
<svg class="abs" style="left:972px;top:23px" width="24" height="11" viewBox="0 0 24 11"><rect x="1.500" y="1.500" width="9" height="8" fill="none" stroke="#e2e2e2" stroke-width="1.100"/><path d="M1.500 3.500h9" stroke="#e2e2e2" stroke-width="1.200"/><rect x="2" y="4.500" width="3" height="4.500" fill="#e2e2e2"/><path d="M16.500 4.500l1.700 1.700l1.700-1.700" fill="none" stroke="#a0a0a0" stroke-width="0.900"/></svg>
<!-- status bar -->
<div class="t" style="left:0;top:596.500px;font-size:5.500px;line-height:6px;height:6px;color:#d0d0d0">2M</div>
<div class="t" style="left:33px;top:596.500px;font-size:5.500px;line-height:6px;height:6px;color:#d0d0d0">&gt;</div>
<!-- sogou ime toolbar -->
<div class="abs" style="left:879.500px;top:140px;width:124px;height:15px;background:#fdfdfd;border-radius:3px;border:1px solid #d8d8d8"></div>
<div class="abs" style="left:880px;top:140px;width:15px;height:15px;background:#e63a24;border-radius:3px"></div>
<div class="t" style="left:882.500px;top:141px;font-size:13px;line-height:13px;height:13px;font-weight:bold;font-style:italic;color:#fff">S</div>
<div class="t" style="left:898px;top:142px;font-size:10px;line-height:11px;height:11px;color:#2a7bd8;font-weight:bold">英</div>
<svg class="abs" style="left:910px;top:140px" width="92" height="15" viewBox="0 0 92 15">
 <g fill="none" stroke="#2a7bd8" stroke-width="1.200">
  <path d="M4.500 5.500a3 3 0 0 0 2 4" stroke-width="1.500"/><circle cx="3" cy="4" r="0.800" fill="#2a7bd8" stroke="none"/>
  <circle cx="18.500" cy="7.500" r="4.500"/><path d="M17 5.500v2M20 5.500v2M16.500 9q2 1.800 4 0" stroke-width="0.900"/>
  <rect x="30" y="2.500" width="3.500" height="6.500" rx="1.700" fill="#2a7bd8"/><path d="M28.500 7.500a3.300 3.300 0 0 0 6.600 0M31.800 11v2" stroke-width="1"/>
  <rect x="39.500" y="4" width="10" height="7.500" rx="1"/><path d="M41.500 6.500h6M41.500 9h6" stroke-width="0.900"/>
 </g>
 <g fill="#c2c2c2" transform="translate(-2.200,0)"><circle cx="60" cy="5" r="2"/><path d="M56.500 12q0-4 3.500-4t3.500 4z"/><circle cx="63.500" cy="6.500" r="1.500"/><path d="M61.500 12q0-3 2.500-3t2.500 3z"/></g>
 <path transform="translate(-2.600,0)" d="M68.500 4.500l3-1.500q1.500 1.500 3 0l3 1.500l-1.300 2.500l-1.200-0.500v5.500h-4v-5.500l-1.200 0.500z" fill="#2a7bd8"/>
 <path transform="translate(8.500,1.500) scale(0.850)" d="M82 12l5-5a2.500 2.500 0 0 1 3.500-3.500l-1.800 1.800l1 1l1.800-1.800a2.500 2.500 0 0 1-3.500 3.500l-5 5z" fill="#2a7bd8" stroke="#2a7bd8" stroke-width="1"/>
</svg>
<!-- green circle at right -->
<div class="abs" style="left:989px;top:236px;width:27px;height:27px;border-radius:50%;background:radial-gradient(circle at 45% 50%,#5ee47a,#34d058 65%,#28b848);border:1.500px solid #d8f4dc;box-shadow:0 0 0 1px #2c5a34"></div>
<div class="abs" style="left:992.500px;top:247px;width:9px;height:6px;font-size:6.500px;line-height:6px;color:#eafff0;letter-spacing:-1.500px">◂◂</div>



<!-- MENU -->
<div class="abs menu" id="selmenu" style="left:65px;top:15.5px;width:131.5px;height:278.5px">
<div class="mi " style="top:0.8px"><span class="l">全部(A)</span><span class="r">Ctrl+A</span></div>
<div class="mi " style="top:13.4px"><span class="l">取消选择(D)</span><span class="r">Ctrl+D</span></div>
<div class="mi dis" style="top:25.6px"><span class="l">重新选择(E)</span><span class="r">Shift+Ctrl+D</span></div>
<div class="mi " style="top:38.0px"><span class="l">反选(I)</span><span class="r">Shift+Ctrl+I</span></div>
<div class="sep" style="top:51.2px"></div>
<div class="mi " style="top:55.4px"><span class="l">所有图层(L)</span><span class="r">Alt+Ctrl+A</span></div>
<div class="mi " style="top:67.6px"><span class="l">取消选择图层(S)</span><span class="r"></span></div>
<div class="mi " style="top:79.8px"><span class="l">查找图层</span><span class="r">Alt+Shift+Ctrl+F</span></div>
<div class="mi " style="top:92.2px"><span class="l">隔离图层</span><span class="r"></span></div>
<div class="sep" style="top:105.9px"></div>
<div class="mi " style="top:109.3px"><span class="l">色彩范围(C)...</span><span class="r"></span></div>
<div class="mi " style="top:121.6px"><span class="l">焦点区域(U)...</span><span class="r"></span></div>
<div class="sep" style="top:135.8px"></div>
<div class="mi " style="top:139.6px"><span class="l">选择并遮住(K)...</span><span class="r">Alt+Ctrl+R</span></div>
<div class="mi hl" style="top:152.0px"><span class="l">修改(M)</span><span class="r" style="right:5.500px;font-size:5px">▶</span></div>
<div class="sep" style="top:166.2px"></div>
<div class="mi " style="top:169.6px"><span class="l">扩大选取(G)</span><span class="r"></span></div>
<div class="mi " style="top:181.7px"><span class="l">选取相似(R)</span><span class="r"></span></div>
<div class="sep" style="top:195.5px"></div>
<div class="mi " style="top:199.6px"><span class="l">变换选区(T)</span><span class="r"></span></div>
<div class="sep" style="top:213.2px"></div>
<div class="mi " style="top:216.6px"><span class="l">在快速蒙版模式下编辑(Q)</span><span class="r"></span></div>
<div class="sep" style="top:230.8px"></div>
<div class="mi " style="top:234.8px"><span class="l">载入选区(O)...</span><span class="r"></span></div>
<div class="mi " style="top:246.8px"><span class="l">存储选区(V)...</span><span class="r"></span></div>
<div class="sep" style="top:260.5px"></div>
<div class="mi " style="top:264.1px"><span class="l">新建 3D 模型(3)</span><span class="r"></span></div>
</div>
<div class="abs menu" id="submenu" style="left:193px;top:166px;width:86.5px;height:64.5px">
<div class="mi " style="top:1.3px"><span class="l">边界(B)...</span><span class="r"></span></div>
<div class="mi " style="top:13.9px"><span class="l">平滑(S)...</span><span class="r"></span></div>
<div class="mi " style="top:26.1px"><span class="l">扩展(E)...</span><span class="r"></span></div>
<div class="mi hl" style="top:38.3px"><span class="l">收缩(C)...</span><span class="r"></span></div>
<div class="mi " style="top:50.9px"><span class="l">羽化(F)...</span><span class="r">Shift+F6</span></div>
</div>
<!-- /MENU -->
<div class="abs" style="left:757px;top:509px;width:206px;height:81px;border-radius:22px;background:rgba(255,255,255,.022);filter:blur(2px)"></div>
<!-- ART -->
<svg class="abs" style="left:400px;top:180px" width="180" height="110" viewBox="400 180 180 110">
<defs><filter id="gb" x="-50%" y="-100%" width="200%" height="300%"><feGaussianBlur stdDeviation="12 10"/></filter><filter id="gc" x="-50%" y="-100%" width="200%" height="300%"><feGaussianBlur stdDeviation="8.5 7"/></filter></defs>
<rect x="444" y="217" width="84" height="37" rx="26" ry="18.500" fill="#96000f" opacity="0.45" filter="url(#gb)"/>
<rect x="449" y="220" width="74.500" height="31.500" rx="26" ry="15.700" fill="#9a000f" filter="url(#gc)"/>
<rect x="455.700" y="224.400" width="61" height="22.400" rx="24" ry="11.200" fill="none" stroke="#3a0a0c" stroke-width="1.100"/>
<rect x="455.700" y="224.400" width="61" height="22.400" rx="24" ry="11.200" fill="none" stroke="#d8b4b4" stroke-width="1.100" stroke-dasharray="2 2"/>
</svg>
<svg class="abs" style="left:0;top:0" width="1000" height="603" viewBox="0 0 1000 603"><polygon points="282.3,204.8 339.0,213.6 395.7,222.1 395.3,224.7 406.4,221.2 396.7,214.8 396.3,217.5 339.4,210.6 282.5,204.0" fill="#ee2a30"/><polygon points="917.2,519.3 911.8,472.4 897.6,366.4 890.6,315.5 892.5,315.2 886.4,306.0 883.1,316.6 885.0,316.3 892.5,367.1 908.4,472.8 916.4,519.5" fill="#f0303a"/><rect x="190" y="198" width="80.500" height="20.500" fill="none" stroke="#e0282c" stroke-width="2"/><rect x="789.800" y="280.300" width="161.700" height="22.600" fill="none" stroke="#e4343a" stroke-width="2.300"/><rect x="914" y="589.500" width="16.500" height="16" fill="none" stroke="#e4343a" stroke-width="1.800"/></svg>
<!-- /ART -->

</body>
</html>
